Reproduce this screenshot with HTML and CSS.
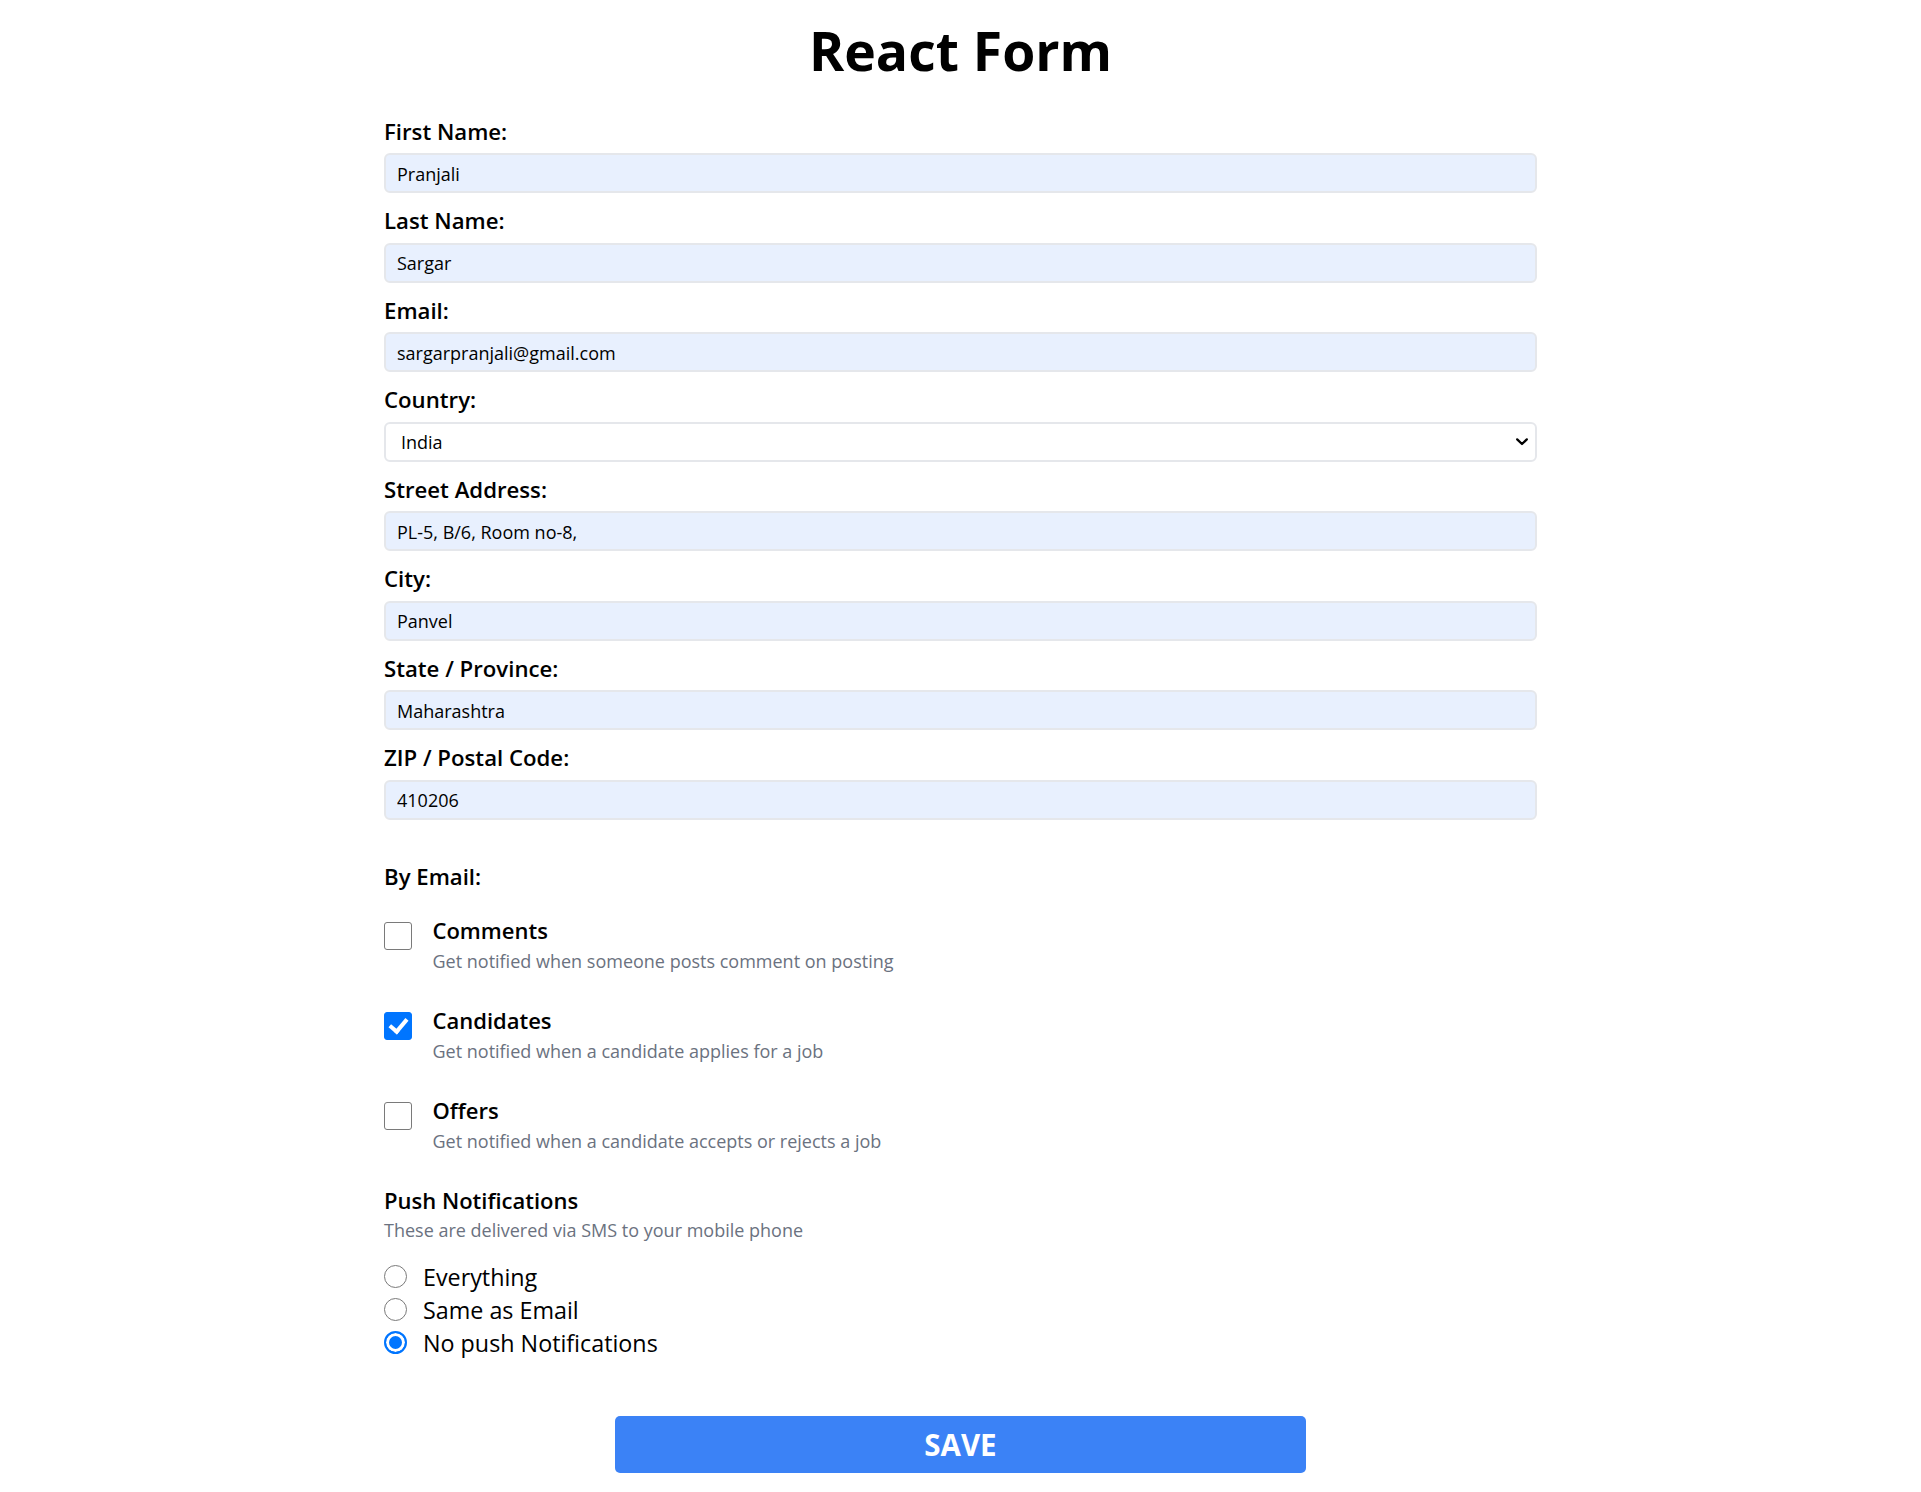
FILE: index.html
```html
<!DOCTYPE html>
<html lang="en">
<head>
<meta charset="utf-8">
<title>React Form</title>
<link rel="stylesheet" href="styles.css">
</head>
<body>
<main class="page">
  <h1 class="title">React Form</h1>
  <form class="form">
    <div class="field">
      <label class="field-label" for="first">First Name:</label>
      <input class="text-input" id="first" type="text" value="Pranjali">
    </div>
    <div class="field">
      <label class="field-label" for="last">Last Name:</label>
      <input class="text-input" id="last" type="text" value="Sargar">
    </div>
    <div class="field">
      <label class="field-label" for="email">Email:</label>
      <input class="text-input" id="email" type="text" value="sargarpranjali@gmail.com">
    </div>
    <div class="field">
      <label class="field-label" for="country">Country:</label>
      <div class="select-wrap">
        <select class="select-input" id="country">
          <option>India</option>
        </select>
        <svg class="chevron" width="12" height="8" viewBox="0 0 12 8" aria-hidden="true"><path d="M1.2 1.4 L6 6 L10.8 1.4" fill="none" stroke="#000" stroke-width="2.3" stroke-linecap="round" stroke-linejoin="round"/></svg>
      </div>
    </div>
    <div class="field">
      <label class="field-label" for="street">Street Address:</label>
      <input class="text-input" id="street" type="text" value="PL-5, B/6, Room no-8,">
    </div>
    <div class="field">
      <label class="field-label" for="city">City:</label>
      <input class="text-input" id="city" type="text" value="Panvel">
    </div>
    <div class="field">
      <label class="field-label" for="state">State / Province:</label>
      <input class="text-input" id="state" type="text" value="Maharashtra">
    </div>
    <div class="field">
      <label class="field-label" for="zip">ZIP / Postal Code:</label>
      <input class="text-input" id="zip" type="text" value="410206">
    </div>

    <section class="by-email">
      <div class="group-title">By Email:</div>
      <div class="check-row">
        <input class="checkbox" type="checkbox" id="comments">
        <div class="check-text">
          <label class="check-title" for="comments">Comments</label>
          <p class="hint">Get notified when someone posts comment on posting</p>
        </div>
      </div>
      <div class="check-row">
        <input class="checkbox" type="checkbox" id="candidates" checked>
        <div class="check-text">
          <label class="check-title" for="candidates">Candidates</label>
          <p class="hint">Get notified when a candidate applies for a job</p>
        </div>
      </div>
      <div class="check-row">
        <input class="checkbox" type="checkbox" id="offers">
        <div class="check-text">
          <label class="check-title" for="offers">Offers</label>
          <p class="hint">Get notified when a candidate accepts or rejects a job</p>
        </div>
      </div>
    </section>

    <section class="push">
      <div class="push-title">Push Notifications</div>
      <p class="hint push-hint">These are delivered via SMS to your mobile phone</p>
      <div class="radios">
        <label class="radio-row"><input class="radio" type="radio" name="push"><span>Everything</span></label>
        <label class="radio-row"><input class="radio" type="radio" name="push"><span>Same as Email</span></label>
        <label class="radio-row"><input class="radio" type="radio" name="push" checked><span>No push Notifications</span></label>
      </div>
    </section>

    <button class="save" type="button">SAVE</button>
  </form>
</main>
</body>
</html>
```

FILE: styles.css
```css
* {
  box-sizing: border-box;
}

body {
  margin: 0;
  background: #fff;
  color: #000;
  font-family: "Open Sans", "Noto Sans", sans-serif;
}

.page {
  width: 1153px;
  margin: 0 auto;
}

.title {
  margin: 19px 0 0;
  font-size: 53.5px;
  line-height: 64px;
  font-weight: 700;
  text-align: center;
}

.form {
  margin-top: 32.5px;
  display: flex;
  flex-direction: column;
}

.field {
  display: flex;
  flex-direction: column;
  margin-bottom: 12px;
}

.field-label {
  font-size: 22.2px;
  line-height: 32px;
  font-weight: 600;
  margin-bottom: 5.5px;
}

.text-input,
.select-input {
  width: 100%;
  height: 40px;
  border: 2px solid #e5e7eb;
  border-radius: 6px;
  font-family: "Open Sans", "Noto Sans", sans-serif;
  font-size: 18px;
  color: #000;
  outline: none;
}

.text-input {
  background: #e8f0fe;
  padding: 1px 11px 0;
}

.select-wrap {
  position: relative;
}

.select-input {
  display: block;
  appearance: none;
  -webkit-appearance: none;
  background: #fff;
  padding: 1px 40px 0 15px;
}

.chevron {
  position: absolute;
  right: 9px;
  top: 16px;
  pointer-events: none;
}

.by-email {
  margin-top: 29px;
}

.group-title {
  font-size: 22.2px;
  line-height: 32px;
  font-weight: 600;
  margin-bottom: 23.5px;
}

.check-row {
  display: flex;
  align-items: flex-start;
  gap: 20.5px;
  margin-bottom: 32px;
}

.checkbox {
  appearance: none;
  -webkit-appearance: none;
  flex: none;
  width: 28px;
  height: 28px;
  margin: 5.5px 0 0;
  border: 1.5px solid #7a7a7a;
  border-radius: 3px;
  background: #fff;
  display: grid;
  place-content: center;
}

.checkbox:checked {
  background: #0075ff;
  border-color: #0075ff;
}

.checkbox:checked::after {
  content: "";
  width: 7px;
  height: 14px;
  border: solid #fff;
  border-width: 0 4px 4px 0;
  transform: translateY(-2px) rotate(40deg);
}

.check-text {
  display: flex;
  flex-direction: column;
}

.check-title {
  font-size: 22px;
  line-height: 28px;
  font-weight: 600;
}

.hint {
  margin: 4px 0 0;
  font-size: 18px;
  line-height: 26px;
  color: #6b7280;
}

.push-title {
  font-size: 22px;
  line-height: 28px;
  font-weight: 600;
}

.push-hint {
  margin-top: 3px;
}

.radios {
  margin-top: 17px;
  display: flex;
  flex-direction: column;
}

.radio-row {
  display: flex;
  align-items: center;
  gap: 16px;
  height: 33px;
  font-size: 23.3px;
  font-weight: 500;
}

.radio {
  appearance: none;
  -webkit-appearance: none;
  flex: none;
  width: 23px;
  height: 23px;
  margin: 0;
  border: 1.5px solid #7a7a7a;
  border-radius: 50%;
  background: #fff;
}

.radio:checked {
  border: 2px solid #0075ff;
  background: #0075ff;
  box-shadow: inset 0 0 0 3px #fff;
}

.save {
  align-self: center;
  width: 691px;
  height: 56.7px;
  margin-top: 57px;
  border: none;
  border-radius: 5px;
  background: #3b82f6;
  color: #fff;
  font-family: "Open Sans", "Noto Sans", sans-serif;
  font-size: 29.5px;
  font-weight: 700;
  cursor: pointer;
}
```
